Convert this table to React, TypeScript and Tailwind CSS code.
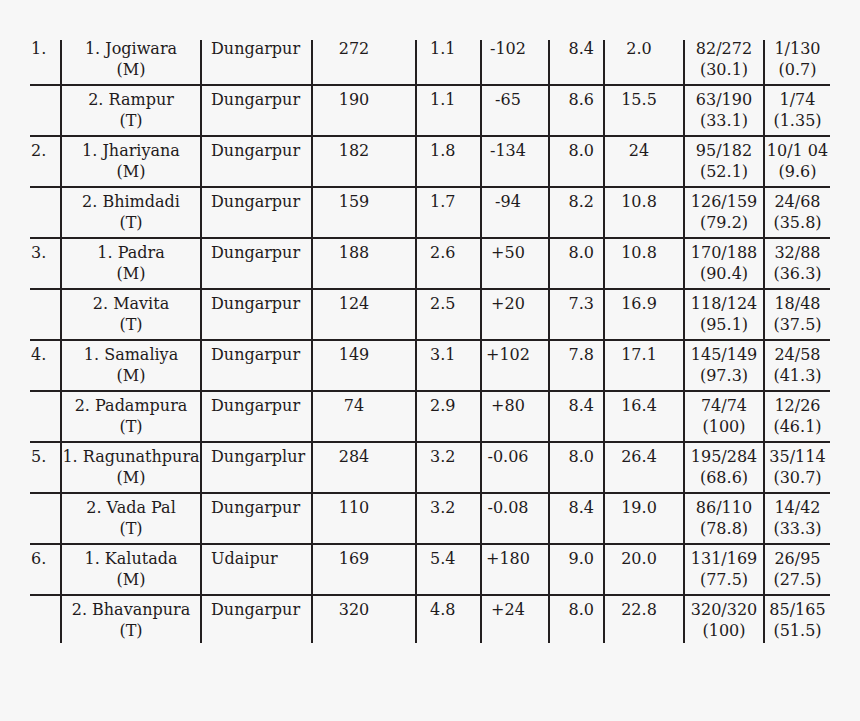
import React from "react";

type Row = {
  no: string;
  name: string;
  type: string;
  district: string;
  a: string;
  b: string;
  c: string;
  d: string;
  e: string;
  f1: string;
  f2: string;
  g1: string;
  g2: string;
};

const rows: Row[] = [
  { no: "1.", name: "1. Jogiwara", type: "(M)", district: "Dungarpur", a: "272", b: "1.1", c: "-102", d: "8.4", e: "2.0", f1: "82/272", f2: "(30.1)", g1: "1/130", g2: "(0.7)" },
  { no: "", name: "2. Rampur", type: "(T)", district: "Dungarpur", a: "190", b: "1.1", c: "-65", d: "8.6", e: "15.5", f1: "63/190", f2: "(33.1)", g1: "1/74", g2: "(1.35)" },
  { no: "2.", name: "1. Jhariyana", type: "(M)", district: "Dungarpur", a: "182", b: "1.8", c: "-134", d: "8.0", e: "24", f1: "95/182", f2: "(52.1)", g1: "10/1 04", g2: "(9.6)" },
  { no: "", name: "2. Bhimdadi", type: "(T)", district: "Dungarpur", a: "159", b: "1.7", c: "-94", d: "8.2", e: "10.8", f1: "126/159", f2: "(79.2)", g1: "24/68", g2: "(35.8)" },
  { no: "3.", name: "1. Padra", type: "(M)", district: "Dungarpur", a: "188", b: "2.6", c: "+50", d: "8.0", e: "10.8", f1: "170/188", f2: "(90.4)", g1: "32/88", g2: "(36.3)" },
  { no: "", name: "2. Mavita", type: "(T)", district: "Dungarpur", a: "124", b: "2.5", c: "+20", d: "7.3", e: "16.9", f1: "118/124", f2: "(95.1)", g1: "18/48", g2: "(37.5)" },
  { no: "4.", name: "1. Samaliya", type: "(M)", district: "Dungarpur", a: "149", b: "3.1", c: "+102", d: "7.8", e: "17.1", f1: "145/149", f2: "(97.3)", g1: "24/58", g2: "(41.3)" },
  { no: "", name: "2. Padampura", type: "(T)", district: "Dungarpur", a: "74", b: "2.9", c: "+80", d: "8.4", e: "16.4", f1: "74/74", f2: "(100)", g1: "12/26", g2: "(46.1)" },
  { no: "5.", name: "1. Ragunathpura", type: "(M)", district: "Dungarplur", a: "284", b: "3.2", c: "-0.06", d: "8.0", e: "26.4", f1: "195/284", f2: "(68.6)", g1: "35/114", g2: "(30.7)" },
  { no: "", name: "2. Vada Pal", type: "(T)", district: "Dungarpur", a: "110", b: "3.2", c: "-0.08", d: "8.4", e: "19.0", f1: "86/110", f2: "(78.8)", g1: "14/42", g2: "(33.3)" },
  { no: "6.", name: "1. Kalutada", type: "(M)", district: "Udaipur", a: "169", b: "5.4", c: "+180", d: "9.0", e: "20.0", f1: "131/169", f2: "(77.5)", g1: "26/95", g2: "(27.5)" },
  { no: "", name: "2. Bhavanpura", type: "(T)", district: "Dungarpur", a: "320", b: "4.8", c: "+24", d: "8.0", e: "22.8", f1: "320/320", f2: "(100)", g1: "85/165", g2: "(51.5)" },
];

const cell = "h-[51px] border-b-2 border-[#231f20] pt-[3px] leading-[21px] whitespace-nowrap";
const br = " border-r-2";

export default function App() {
  return (
    <div
      className="w-[860px] h-[721px] bg-[#f7f7f7] text-[#1f1b1c] text-[16px] overflow-hidden"
      style={{ fontFamily: '"DejaVu Serif", "Liberation Serif", serif' }}
    >
      <div className="ml-[30px] mt-[40px] w-[800px] h-[603px] overflow-hidden">
        <div className="-mt-[5px] grid grid-cols-[32px_140px_111px_104px_65px_68px_55px_80px_80px_65px]">
          {rows.map((r, i) => (
            <React.Fragment key={i}>
              <div className={cell + br + " text-left pl-[1px]"}>{r.no}</div>
              <div className={cell + br + " text-center"}>
                <div>{r.name}</div>
                <div>{r.type}</div>
              </div>
              <div className={cell + br + " text-left pl-[9px]"}>{r.district}</div>
              <div className={cell + br + " text-center pr-[20px]"}>{r.a}</div>
              <div className={cell + br + " text-left pl-[13px]"}>{r.b}</div>
              <div className={cell + br + " text-center pr-[14px]"}>{r.c}</div>
              <div className={cell + br + " text-right pr-[9px]"}>{r.d}</div>
              <div className={cell + br + " text-center pr-[10px]"}>{r.e}</div>
              <div className={cell + br + " text-center"}>
                <div>{r.f1}</div>
                <div>{r.f2}</div>
              </div>
              <div className={cell + " text-center"}>
                <div>{r.g1}</div>
                <div>{r.g2}</div>
              </div>
            </React.Fragment>
          ))}
        </div>
      </div>
    </div>
  );
}
